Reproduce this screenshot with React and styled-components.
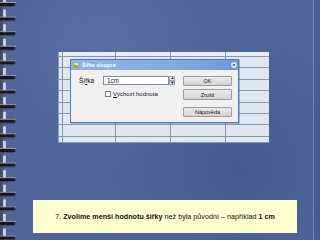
import React from "react";
import styled, { createGlobalStyle } from "styled-components";

const Global = createGlobalStyle`
  html, body { margin: 0; padding: 0; }
  body { width: 320px; height: 240px; overflow: hidden; }
`;

const Page = styled.div`
  width: 320px;
  height: 240px;
  display: flex;
  background-color: #4f6599;
  background-image:
    radial-gradient(circle at 30% 20%, rgba(120,140,190,0.25), transparent 40%),
    radial-gradient(circle at 75% 70%, rgba(40,55,100,0.22), transparent 45%),
    radial-gradient(circle at 60% 10%, rgba(90,110,160,0.2), transparent 35%);
  overflow: hidden;
  font-family: "Liberation Sans", Arial, sans-serif;
`;

const Binding = styled.div`
  width: 18px;
  flex: none;
  height: 240px;
`;

const Slide = styled.div`
  flex: 1;
  display: flex;
  flex-direction: column;
  padding-top: 52px;
`;

const RightEdge = styled.div`
  width: 6px;
  flex: none;
  border-left: 1px solid rgba(170, 185, 220, 0.45);
  background: rgba(40, 55, 95, 0.15);
`;

const SheetArea = styled.div`
  position: relative;
  margin-left: 40px;
  width: 211px;
  height: 91px;
`;

const Sheet = styled.div`
  width: 211px;
  height: 91px;
  display: grid;
  grid-template-columns: 4px 53px 55px 55px 44px;
  grid-template-rows: 5px repeat(7, 11.4px) 1fr;
  background: #e1e8f2;
  border-left: 1px solid #8f9db5;
  box-sizing: border-box;
  overflow: hidden;
`;

const Cell = styled.div`
  border-right: 1px solid #8796b0;
  border-bottom: 1px solid #8796b0;
  background: ${(p) => (p.$head ? "#e8eef6" : "#dfe7f1")};
`;

const Dialog = styled.div`
  position: absolute;
  left: 12px;
  top: 7px;
  width: 169px;
  height: 64px;
  box-sizing: border-box;
  border: 1px solid #4a78c2;
  background: #f0f0f0;
  display: flex;
  flex-direction: column;
  box-shadow: 1px 1px 0 rgba(60, 80, 130, 0.35);
`;

const TitleBar = styled.div`
  height: 10px;
  flex: none;
  display: flex;
  align-items: center;
  gap: 3px;
  padding: 0 1px 0 2px;
  background: linear-gradient(to right, #93b4e6, #86a9e2 60%, #6f97da);
`;

const TitleText = styled.span`
  color: #ffffff;
  font-size: 5px;
  font-weight: bold;
  letter-spacing: 0.1px;
  flex: 1;
`;

const CloseBtn = styled.div`
  width: 6px;
  height: 6px;
  border-radius: 50%;
  background: radial-gradient(circle, #f4f4f4 30%, #b9c2d4);
  color: #333;
  font-size: 5px;
  line-height: 6px;
  text-align: center;
  font-weight: bold;
`;

const Body = styled.div`
  flex: 1;
  display: flex;
  padding: 6px 6px 0 8px;
  gap: 8px;
`;

const LeftCol = styled.div`
  display: flex;
  flex-direction: column;
  gap: 6px;
`;

const FieldRow = styled.div`
  display: flex;
  align-items: center;
`;

const Label = styled.span`
  width: 24px;
  font-size: 6.5px;
  color: #111;
`;

const Acc = styled.span`
  text-decoration: underline;
`;

const Input = styled.div`
  width: 66px;
  height: 9px;
  box-sizing: border-box;
  border: 1px solid #7f8ea8;
  background: #fff;
  font-size: 6.3px;
  line-height: 7px;
  padding-left: 3px;
  color: #111;
`;

const Spin = styled.div`
  width: 6px;
  height: 9px;
  display: flex;
  flex-direction: column;
`;

const SpinPart = styled.div`
  flex: 1;
  background: linear-gradient(#f7f7f7, #dcdcdc);
  border: 1px solid #9aa3b3;
  box-sizing: border-box;
  display: flex;
  align-items: center;
  justify-content: center;
`;

const CheckRow = styled.div`
  display: flex;
  align-items: center;
  gap: 2px;
  margin-left: 26px;
`;

const Box = styled.div`
  width: 6px;
  height: 6px;
  box-sizing: border-box;
  border: 1px solid #6f7f99;
  background: #fff;
`;

const CheckText = styled.span`
  font-size: 6px;
  color: #111;
`;

const RightCol = styled.div`
  display: flex;
  flex-direction: column;
`;

const Button = styled.div`
  width: 49px;
  height: ${(p) => p.$h || 10}px;
  margin-bottom: ${(p) => p.$mb || 0}px;
  box-sizing: border-box;
  border: 1px solid #9c9c9c;
  border-radius: 1px;
  background: linear-gradient(#ececec, #d3d3d3);
  font-size: 5.5px;
  color: #222;
  display: flex;
  align-items: center;
  justify-content: center;
`;

const Caption = styled.div`
  margin-top: 57px;
  margin-left: 15px;
  width: 264px;
  height: 33px;
  background: #fdfdd0;
  display: flex;
  align-items: center;
  justify-content: center;
  font-size: 7.2px;
  color: #111;
  white-space: nowrap;
`;

const B = styled.b`
  font-weight: bold;
`;

function SpiralBinding() {
  const rings = [];
  for (let i = 0; i < 17; i++) {
    const y = 3 + i * 14.6;
    rings.push(
      <g key={i}>
        <rect x="3.2" y={y - 8} width="2.6" height="9" fill="#d9dee9" />
        <rect x="0" y={y - 1} width="16" height="1.2" fill="#8e94a4" />
        <rect x="0" y={y} width="15" height="3" fill="#16161e" />
        <rect x="13" y={y + 0.5} width="2.5" height="2" fill="#2a2a35" />
        <rect x="0" y={y + 3} width="14" height="1" fill="#474c5e" />
      </g>
    );
  }
  return (
    <svg width="18" height="240" viewBox="0 0 18 240">
      <rect x="0" y="0" width="2.5" height="240" fill="#454b63" />
      {rings}
    </svg>
  );
}

function AppIcon() {
  return (
    <svg width="6" height="7" viewBox="0 0 6 7">
      <path d="M0.5 0.5h3.5l1.5 1.5v4.5h-5z" fill="#f4f4e8" stroke="#8a8a6a" strokeWidth="0.5" />
      <rect x="1" y="3" width="4" height="3" fill="#7fbf3f" />
      <rect x="1" y="1.2" width="2" height="1.5" fill="#e6c840" />
    </svg>
  );
}

export default function App() {
  const cells = [];
  for (let r = 0; r < 9; r++) {
    for (let c = 0; c < 5; c++) {
      cells.push(<Cell key={`${r}-${c}`} $head={r === 0} />);
    }
  }
  return (
    <>
      <Global />
      <Page>
        <Binding>
          <SpiralBinding />
        </Binding>
        <Slide>
          <SheetArea>
            <Sheet>{cells}</Sheet>
            <Dialog>
              <TitleBar>
                <AppIcon />
                <TitleText>Šířka sloupce</TitleText>
                <CloseBtn>×</CloseBtn>
              </TitleBar>
              <Body>
                <LeftCol>
                  <FieldRow>
                    <Label>
                      Ší<Acc>ř</Acc>ka
                    </Label>
                    <Input>1cm</Input>
                    <Spin>
                      <SpinPart>
                        <svg width="3" height="2" viewBox="0 0 3 2">
                          <path d="M0 2L1.5 0L3 2z" fill="#333" />
                        </svg>
                      </SpinPart>
                      <SpinPart>
                        <svg width="3" height="2" viewBox="0 0 3 2">
                          <path d="M0 0L1.5 2L3 0z" fill="#333" />
                        </svg>
                      </SpinPart>
                    </Spin>
                  </FieldRow>
                  <CheckRow>
                    <Box />
                    <CheckText>
                      <Acc>V</Acc>ýchozí hodnota
                    </CheckText>
                  </CheckRow>
                </LeftCol>
                <RightCol>
                  <Button $mb={3}>OK</Button>
                  <Button $h={11} $mb={7}>Zrušit</Button>
                  <Button>Nápověda</Button>
                </RightCol>
              </Body>
            </Dialog>
          </SheetArea>
          <Caption>
            <span>
              7. <B>Zvolíme menší hodnotu šířky</B> než byla původní – například <B>1 cm</B>
            </span>
          </Caption>
        </Slide>
        <RightEdge />
      </Page>
    </>
  );
}
